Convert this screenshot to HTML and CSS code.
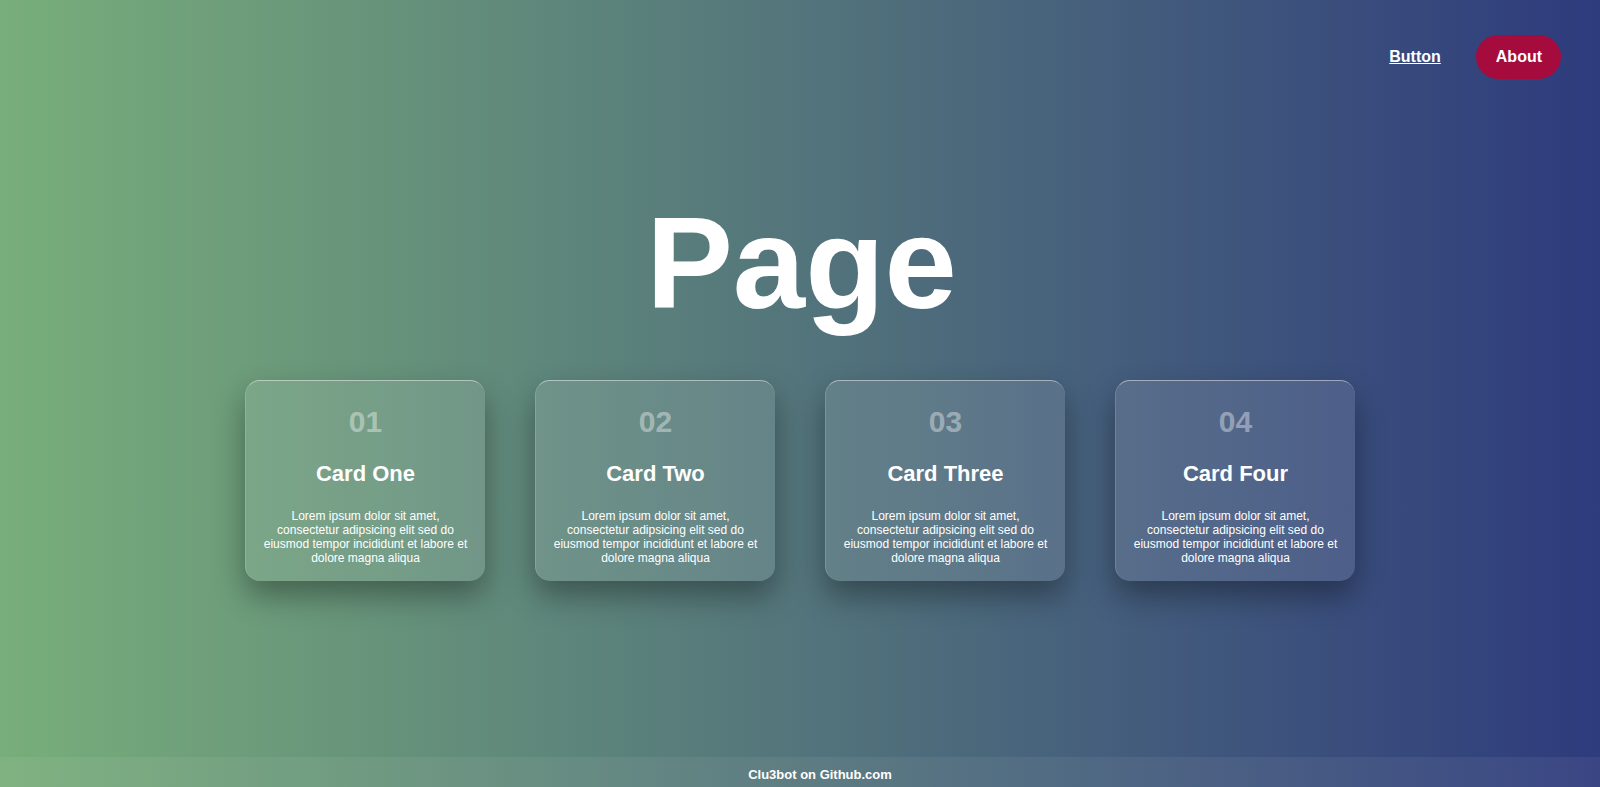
FILE: index.html
```html
<!DOCTYPE html>
<html lang="en">
<head>
<meta charset="utf-8">
<title>Page</title>
<link rel="stylesheet" href="styles.css">
</head>
<body>
<div class="page">
  <header class="topbar">
    <nav class="nav">
      <a class="nav-link" href="#">Button</a>
      <a class="nav-pill" href="#">About</a>
    </nav>
  </header>
  <main class="main">
    <h1 class="title">Page</h1>
    <section class="cards">
      <article class="card">
        <h2 class="card-num">01</h2>
        <h3 class="card-title">Card One</h3>
        <p class="card-text">Lorem ipsum dolor sit amet, consectetur adipsicing elit sed do eiusmod tempor incididunt et labore et dolore magna aliqua</p>
      </article>
      <article class="card">
        <h2 class="card-num">02</h2>
        <h3 class="card-title">Card Two</h3>
        <p class="card-text">Lorem ipsum dolor sit amet, consectetur adipsicing elit sed do eiusmod tempor incididunt et labore et dolore magna aliqua</p>
      </article>
      <article class="card">
        <h2 class="card-num">03</h2>
        <h3 class="card-title">Card Three</h3>
        <p class="card-text">Lorem ipsum dolor sit amet, consectetur adipsicing elit sed do eiusmod tempor incididunt et labore et dolore magna aliqua</p>
      </article>
      <article class="card">
        <h2 class="card-num">04</h2>
        <h3 class="card-title">Card Four</h3>
        <p class="card-text">Lorem ipsum dolor sit amet, consectetur adipsicing elit sed do eiusmod tempor incididunt et labore et dolore magna aliqua</p>
      </article>
    </section>
  </main>
  <footer class="footer">Clu3bot on Github.com</footer>
</div>
</body>
</html>
```

FILE: styles.css
```css
* { box-sizing: border-box; }
html, body { margin: 0; padding: 0; }
body {
  font-family: "Liberation Sans", Arial, sans-serif;
  color: #fff;
  background: linear-gradient(to right, #78ae7a, #2e3b7d);
  min-height: 100vh;
}
.page {
  min-height: 100vh;
  display: flex;
  flex-direction: column;
}
.topbar {
  display: flex;
  justify-content: flex-end;
  padding: 35px 39px 0 0;
}
.nav {
  display: flex;
  align-items: center;
  gap: 35px;
}
.nav-link {
  color: #fff;
  font-weight: bold;
  font-size: 16px;
  text-decoration: underline;
}
.nav-pill {
  display: inline-flex;
  align-items: center;
  justify-content: center;
  height: 44px;
  padding: 0 19px 0 20px;
  border-radius: 22px;
  background: #a50b3d;
  color: #fff;
  font-weight: bold;
  font-size: 16px;
  text-decoration: none;
}
.main {
  flex: 1;
  display: flex;
  flex-direction: column;
  align-items: center;
}
.title {
  margin: 119px 0 0;
  font-size: 130px;
  line-height: 130px;
  font-weight: bold;
  padding-left: 3px;
}
.cards {
  margin-top: 52px;
  display: flex;
  gap: 50px;
}
.card {
  width: 240px;
  height: 201px;
  padding: 24px 16px 0;
  border-radius: 15px;
  background: rgba(255, 255, 255, 0.1);
  border-top: 1px solid rgba(255, 255, 255, 0.45);
  border-left: 1px solid rgba(255, 255, 255, 0.15);
  box-shadow: 0 15px 30px rgba(0, 0, 0, 0.35);
  text-align: center;
}
.card-num {
  margin: 0;
  font-size: 30px;
  line-height: 34px;
  font-weight: bold;
  color: rgba(255, 255, 255, 0.4);
}
.card-title {
  margin: 22px 0 0;
  font-size: 22px;
  line-height: 25px;
  font-weight: bold;
}
.card-text {
  margin: 23px 0 0;
  font-size: 12px;
  line-height: 14px;
}
.footer {
  height: 30px;
  display: flex;
  align-items: center;
  justify-content: center;
  padding: 4px 0 0 40px;
  background: rgba(255, 255, 255, 0.06);
  font-size: 13px;
  font-weight: bold;
}
```
